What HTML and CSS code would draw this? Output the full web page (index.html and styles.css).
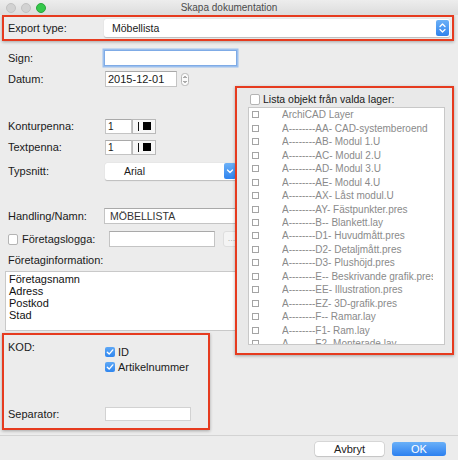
FILE: index.html
```html
<!DOCTYPE html>
<html lang="sv">
<head>
<meta charset="utf-8">
<title>Skapa dokumentation</title>
<link rel="stylesheet" href="styles.css">
</head>
<body>
<div class="window">
  <div class="titlebar">
    <div class="lights"><span class="light off"></span><span class="light off"></span><span class="light green"></span></div>
    <div class="title">Skapa dokumentation</div>
  </div>
  <div class="content">
    <div class="export mark">
      <span class="label">Export type:</span>
      <div class="popup popup-export">
        <span class="popup-text">Möbellista</span>
        <span class="blue-btn updown">
          <svg width="13" height="16" viewBox="0 0 13 16"><path d="M4 6.5 L6.5 4 L9 6.5 M4 9.5 L6.5 12 L9 9.5" fill="none" stroke="#fff" stroke-width="1.3" stroke-linecap="round" stroke-linejoin="round"/></svg>
        </span>
      </div>
    </div>

    <div class="row r-sign"><span class="label">Sign:</span><div class="field f-sign focus"></div></div>
    <div class="row r-datum"><span class="label">Datum:</span><div class="field f-datum">2015-12-01</div>
      <span class="mini-stepper"><svg width="8" height="13" viewBox="0 0 8 13"><rect x="0.5" y="0.5" width="7" height="12" rx="3" fill="#fafafa" stroke="#b8b8b8"/><path d="M2.5 5 L4 3.5 L5.5 5 M2.5 8 L4 9.5 L5.5 8" fill="none" stroke="#444" stroke-width="0.9"/></svg></span>
    </div>

    <div class="row r-kontur"><span class="label">Konturpenna:</span><div class="field f-pen">1</div><div class="pen-btn"><span class="pen-line"></span><span class="pen-sq"></span></div></div>
    <div class="row r-text"><span class="label">Textpenna:</span><div class="field f-pen">1</div><div class="pen-btn"><span class="pen-line"></span><span class="pen-sq"></span></div></div>
    <div class="row r-typ"><span class="label">Typsnitt:</span>
      <div class="popup popup-font">
        <span class="popup-text font-text">Arial</span>
        <span class="blue-btn down">
          <svg width="12" height="16" viewBox="0 0 12 16"><path d="M3.5 7 L6 9.5 L8.5 7" fill="none" stroke="#fff" stroke-width="1.3" stroke-linecap="round" stroke-linejoin="round"/></svg>
        </span>
      </div>
    </div>

    <div class="row r-handling"><span class="label">Handling/Namn:</span><div class="field f-handling">MÖBELLISTA</div></div>
    <div class="row r-logga"><span class="cb-white"></span><span class="label label-logga">Företagslogga:</span><div class="field f-logga"></div><div class="dots-btn">...</div></div>
    <div class="row r-info"><span class="label label-wide">Företaginformation:</span></div>
    <div class="textarea">
      <div>Företagsnamn</div>
      <div>Adress</div>
      <div>Postkod</div>
      <div>Stad</div>
    </div>

    <div class="kod mark">
      <div class="kod-top">
        <span class="label kod-label">KOD:</span>
        <div class="checks">
          <div class="check-row"><span class="cb-blue"><svg width="10" height="10" viewBox="0 0 10 10"><path d="M2.3 5.2 L4.2 7.1 L7.8 2.9" fill="none" stroke="#fff" stroke-width="1.4" stroke-linecap="round" stroke-linejoin="round"/></svg></span><span>ID</span></div>
          <div class="check-row"><span class="cb-blue"><svg width="10" height="10" viewBox="0 0 10 10"><path d="M2.3 5.2 L4.2 7.1 L7.8 2.9" fill="none" stroke="#fff" stroke-width="1.4" stroke-linecap="round" stroke-linejoin="round"/></svg></span><span>Artikelnummer</span></div>
        </div>
      </div>
      <div class="sep-row"><span class="label kod-label">Separator:</span><div class="field f-sep"></div></div>
    </div>

    <div class="divider"></div>
    <div class="buttons">
      <div class="btn btn-cancel">Avbryt</div>
      <div class="btn btn-ok">OK</div>
    </div>
  </div>

  <div class="layers mark">
    <div class="lista-row"><span class="cb-white"></span><span>Lista objekt från valda lager:</span></div>
    <div class="list">
      <div class="item"><span class="sq"></span><span class="item-text">ArchiCAD Layer</span></div>
      <div class="item"><span class="sq"></span><span class="item-text">A--------AA- CAD-systemberoend</span></div>
      <div class="item"><span class="sq"></span><span class="item-text">A--------AB- Modul 1.U</span></div>
      <div class="item"><span class="sq"></span><span class="item-text">A--------AC- Modul 2.U</span></div>
      <div class="item"><span class="sq"></span><span class="item-text">A--------AD- Modul 3.U</span></div>
      <div class="item"><span class="sq"></span><span class="item-text">A--------AE- Modul 4.U</span></div>
      <div class="item"><span class="sq"></span><span class="item-text">A--------AX- Låst modul.U</span></div>
      <div class="item"><span class="sq"></span><span class="item-text">A--------AY- Fästpunkter.pres</span></div>
      <div class="item"><span class="sq"></span><span class="item-text">A--------B-- Blankett.lay</span></div>
      <div class="item"><span class="sq"></span><span class="item-text">A--------D1- Huvudmått.pres</span></div>
      <div class="item"><span class="sq"></span><span class="item-text">A--------D2- Detaljmått.pres</span></div>
      <div class="item"><span class="sq"></span><span class="item-text">A--------D3- Plushöjd.pres</span></div>
      <div class="item"><span class="sq"></span><span class="item-text">A--------E-- Beskrivande grafik.pres</span></div>
      <div class="item"><span class="sq"></span><span class="item-text">A--------EE- Illustration.pres</span></div>
      <div class="item"><span class="sq"></span><span class="item-text">A--------EZ- 3D-grafik.pres</span></div>
      <div class="item"><span class="sq"></span><span class="item-text">A--------F-- Ramar.lay</span></div>
      <div class="item"><span class="sq"></span><span class="item-text">A--------F1- Ram.lay</span></div>
      <div class="item"><span class="sq"></span><span class="item-text">A--------F2- Monterade.lay</span></div>
    </div>
  </div>
</div>
</body>
</html>
```

FILE: styles.css
```css
* { box-sizing: border-box; }
html, body { margin: 0; padding: 0; }
body {
  width: 458px;
  height: 460px;
  overflow: hidden;
  background: #ececec;
  font-family: "Liberation Sans", Arial, sans-serif;
  font-size: 11px;
  color: #1a1a1a;
}
.window {
  position: relative;
  width: 458px;
  height: 460px;
  background: #ececec;
}
.titlebar {
  position: relative;
  height: 15px;
  background: linear-gradient(#ededed, #dcdcdc);
  display: flex;
  align-items: center;
}
.lights {
  display: flex;
  gap: 5px;
  padding-left: 6px;
}
.light {
  width: 10px;
  height: 10px;
  border-radius: 50%;
}
.light.off { background: #d2d2d2; border: 1px solid #c2c2c2; }
.light.green { background: #35c84b; border: 1px solid #2aa63c; }
.title {
  position: absolute;
  left: 0; right: 0; top: 2px;
  text-align: center;
  font-size: 10px;
  color: #4b4b4b;
}
.mark {
  border: 2px solid #e63b1f;
  box-shadow: 0 1px 3px rgba(0,0,0,0.3);
}
.export {
  margin-left: 2px;
  width: 452px;
  height: 26px;
  display: flex;
  align-items: center;
  padding: 0 2px 0 4px;
}
.label { width: 96px; flex: none; white-space: nowrap; }
.popup {
  height: 18px;
  background: #fff;
  display: flex;
  align-items: center;
  justify-content: space-between;
  box-shadow: 0 0.5px 1px rgba(0,0,0,0.2);
  border-radius: 2px;
}
.popup-export { flex: 1; }
.popup-text { padding-left: 8px; font-size: 10.5px; }
.blue-btn {
  display: flex;
  align-items: center;
  justify-content: center;
  background: linear-gradient(#6cb1f7, #2f83ee);
  border-radius: 2px;
  height: 16px;
  margin-right: 1px;
}
.updown { width: 13px; }
.down { width: 12px; }

.row {
  display: flex;
  align-items: center;
  height: 16px;
  padding-left: 8px;
}
.r-sign { margin-top: 9px; }
.r-datum { margin-top: 5px; }
.r-kontur { margin-top: 31px; }
.r-text { margin-top: 5px; }
.r-typ { margin-top: 8px; }
.r-handling { margin-top: 29px; }
.r-logga { margin-top: 7px; }
.r-info { margin-top: 7px; height: 12px; }

.field {
  height: 16px;
  background: #fff;
  border: 1px solid #c4c4c4;
  border-top-color: #a9a9a9;
  font-size: 11px;
  line-height: 14px;
  padding-left: 2px;
  white-space: nowrap;
  overflow: hidden;
}
.f-sign { width: 133px; }
.focus { border-color: #7fabe6; box-shadow: 0 0 0 1.5px #9cc0ee; }
.f-datum { width: 72px; margin-left: 1px; }
.mini-stepper { margin-left: 4px; display: flex; }
.f-pen { width: 27px; margin-left: 1px; height: 15px; line-height: 13px; font-size: 10px; }
.pen-btn {
  width: 24px;
  height: 15px;
  border: 1px solid #b9b9b9;
  background: #f7f7f7;
  display: flex;
  align-items: center;
  padding-left: 5px;
  gap: 4px;
}
.pen-line { width: 1px; height: 9px; background: #111; }
.pen-sq { width: 8px; height: 8px; background: #000; }
.popup-font { width: 132px; margin-left: 1px; height: 17px; }
.font-text { padding-left: 19px; }
.f-handling { width: 140px; color: #333; padding-left: 5px; font-size: 10.5px; }
.cb-white {
  width: 10px;
  height: 11px;
  background: #fff;
  border: 1px solid #b4b4b4;
  border-radius: 2px;
  flex: none;
}
.label-logga { width: 86px; margin-left: 4px; }
.f-logga { width: 106px; margin-left: 1px; }
.dots-btn {
  width: 17px;
  height: 16px;
  margin-left: 8px;
  background: #f4f4f4;
  border: 1px solid #dedede;
  border-radius: 3px;
  color: #b0b0b0;
  font-size: 9px;
  line-height: 12px;
  text-align: center;
}
.label-wide { width: auto; }
.textarea {
  margin-top: 5px;
  margin-left: 5px;
  width: 236px;
  height: 60px;
  background: #fff;
  border: 1px solid #c9c9c9;
  padding: 1px 0 0 3px;
  line-height: 12px;
  font-size: 11px;
  color: #111;
}

.kod {
  margin-top: 2px;
  margin-left: 2px;
  width: 208px;
  height: 97px;
  display: flex;
  flex-direction: column;
  padding-left: 4px;
}
.kod-top { display: flex; padding-top: 6px; }
.kod-label { width: 97px; line-height: 12px; }
.checks { margin-top: 3px; }
.check-row {
  display: flex;
  align-items: center;
  height: 15px;
  gap: 3px;
}
.cb-blue {
  width: 10px;
  height: 10px;
  border-radius: 2px;
  background: linear-gradient(#5ea8f6, #2f86ef);
  display: flex;
}
.sep-row {
  margin-top: auto;
  margin-bottom: 7px;
  display: flex;
  align-items: center;
}
.f-sep { width: 86px; height: 14px; border-color: #d2d2d2; }

.divider {
  margin-top: 5px;
  border-top: 1px solid #d3d3d3;
}
.buttons {
  margin-top: 6px;
  display: flex;
  justify-content: flex-end;
  gap: 8px;
  padding-right: 12px;
}
.btn {
  height: 14px;
  border-radius: 3px;
  text-align: center;
  line-height: 14px;
  font-size: 11px;
}
.btn-cancel {
  width: 69px;
  background: #fff;
  box-shadow: 0 0 0 0.5px #c0c0c0, 0 1px 1px rgba(0,0,0,0.15);
  color: #222;
}
.btn-ok {
  width: 54px;
  background: linear-gradient(#6ab0f8, #2c80f0);
  color: #fff;
}

.layers {
  position: absolute;
  left: 235px;
  top: 86px;
  width: 219px;
  height: 269px;
  background: #e9e9e9;
  padding: 4px 0 0 11px;
}
.lista-row {
  display: flex;
  align-items: center;
  height: 14px;
  padding-left: 2px;
  gap: 3px;
  font-size: 10.5px;
  white-space: nowrap;
}
.list {
  margin-top: 1px;
  width: 197px;
  height: 238px;
  background: #fff;
  border: 1px solid #c8c8c8;
  overflow: hidden;
  font-size: 10px;
  color: #8a8a8a;
}
.item {
  display: flex;
  align-items: center;
  height: 13.47px;
}
.sq {
  width: 7px;
  height: 7px;
  margin-left: 3px;
  margin-right: 23px;
  border: 1px solid #a4a4a4;
  flex: none;
}
.item-text {
  width: 151px;
  overflow: hidden;
  white-space: nowrap;
}
```
